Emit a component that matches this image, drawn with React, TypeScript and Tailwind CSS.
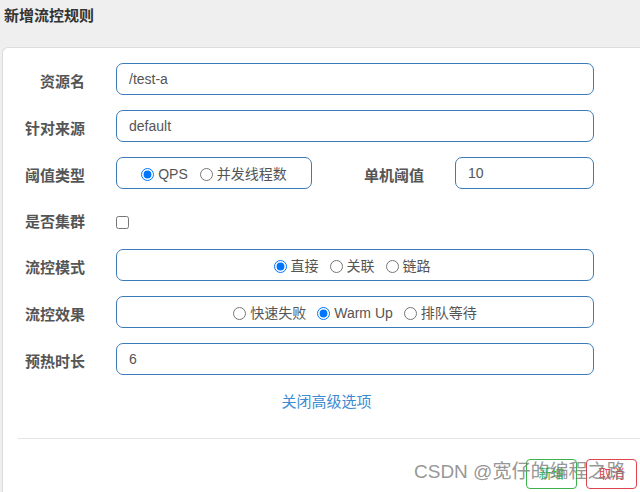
import React from 'react';

const font = "font-['Liberation_Sans','Noto_Sans_CJK_SC',sans-serif]";

function Label({ children, w = 'w-[82px]' }: { children: React.ReactNode; w?: string }) {
  return (
    <div className={`${w} shrink-0 mt-[6px] text-right text-[15px] font-bold text-[#555] mr-[31px]`}>{children}</div>
  );
}

function Field({ value, w }: { value: string; w: string }) {
  return (
    <div className={`${w} h-[32px] flex items-center rounded-[7px] border border-[#3a7bb9] px-[12px] text-[14px] text-[#555]`}>
      {value}
    </div>
  );
}

function Radio({ label, checked }: { label: string; checked?: boolean }) {
  return (
    <label className="flex items-center gap-[4px] text-[14px] text-[#555]">
      <input type="radio" checked={!!checked} readOnly className="m-0 w-[13px] h-[13px]" />
      <span>{label}</span>
    </label>
  );
}

export default function App() {
  return (
    <div className={`${font} w-[640px] h-[492px] bg-[#efefef] overflow-hidden relative`}>
      {/* Header */}
      <div className="h-[47px] pl-[4px] pt-[5px] text-[15px] leading-[22px] font-bold text-[#333]">新增流控规则</div>

      {/* Body */}
      <div className="ml-[2px] h-[445px] bg-white border-t border-l border-[#dcdcdc] rounded-tl-[6px] pt-[15px]">
        <div className="flex flex-col gap-[15px]">
          <div className="flex items-center">
            <Label>资源名</Label>
            <Field value="/test-a" w="w-[478px]" />
          </div>
          <div className="flex items-center">
            <Label>针对来源</Label>
            <Field value="default" w="w-[478px]" />
          </div>
          <div className="flex items-center">
            <Label>阈值类型</Label>
            <div className="w-[196px] h-[32px] pt-[3px] rounded-[7px] border border-[#3a7bb9] flex items-center justify-center gap-[12px]">
              <Radio label="QPS" checked />
              <Radio label="并发线程数" />
            </div>
            <Label w="w-[112px]">单机阈值</Label>
            <Field value="10" w="w-[139px]" />
          </div>
          <div className="flex items-center h-[30px]">
            <Label>是否集群</Label>
            <input type="checkbox" readOnly className="m-0 mt-[6px] w-[13px] h-[13px]" />
          </div>
          <div className="flex items-center">
            <Label>流控模式</Label>
            <div className="w-[478px] h-[32px] pt-[3px] rounded-[7px] border border-[#3a7bb9] flex items-center justify-center gap-[11px] pr-[6px]">
              <Radio label="直接" checked />
              <Radio label="关联" />
              <Radio label="链路" />
            </div>
          </div>
          <div className="flex items-center">
            <Label>流控效果</Label>
            <div className="w-[478px] h-[32px] pt-[3px] rounded-[7px] border border-[#3a7bb9] flex items-center justify-center gap-[11px]">
              <Radio label="快速失败" />
              <Radio label="Warm Up" checked />
              <Radio label="排队等待" />
            </div>
          </div>
          <div className="flex items-center">
            <Label>预热时长</Label>
            <Field value="6" w="w-[478px]" />
          </div>
        </div>

        <div className="mt-[17px] text-center text-[15px] leading-[20px] text-[#3d8bd3] pl-[10px]">关闭高级选项</div>

        <div className="ml-[15px] mt-[26px] border-t border-[#e5e5e5]" />

        <div className="flex justify-end gap-[9px] mt-[20px] pr-[3px]">
          <button className="w-[51px] h-[30px] rounded-[4px] border border-[#3cb34a] text-[#3cb34a] text-[13px]">新增</button>
          <button className="w-[51px] h-[30px] rounded-[4px] border border-[#e0434f] text-[#e0434f] text-[13px]">取消</button>
        </div>
      </div>

      {/* Watermark */}
      <div className="absolute left-[414px] top-[460px] text-[19px] leading-[24px] text-[#7a7a7a]/80 whitespace-nowrap">
        CSDN @宽仔的编程之路
      </div>
    </div>
  );
}
